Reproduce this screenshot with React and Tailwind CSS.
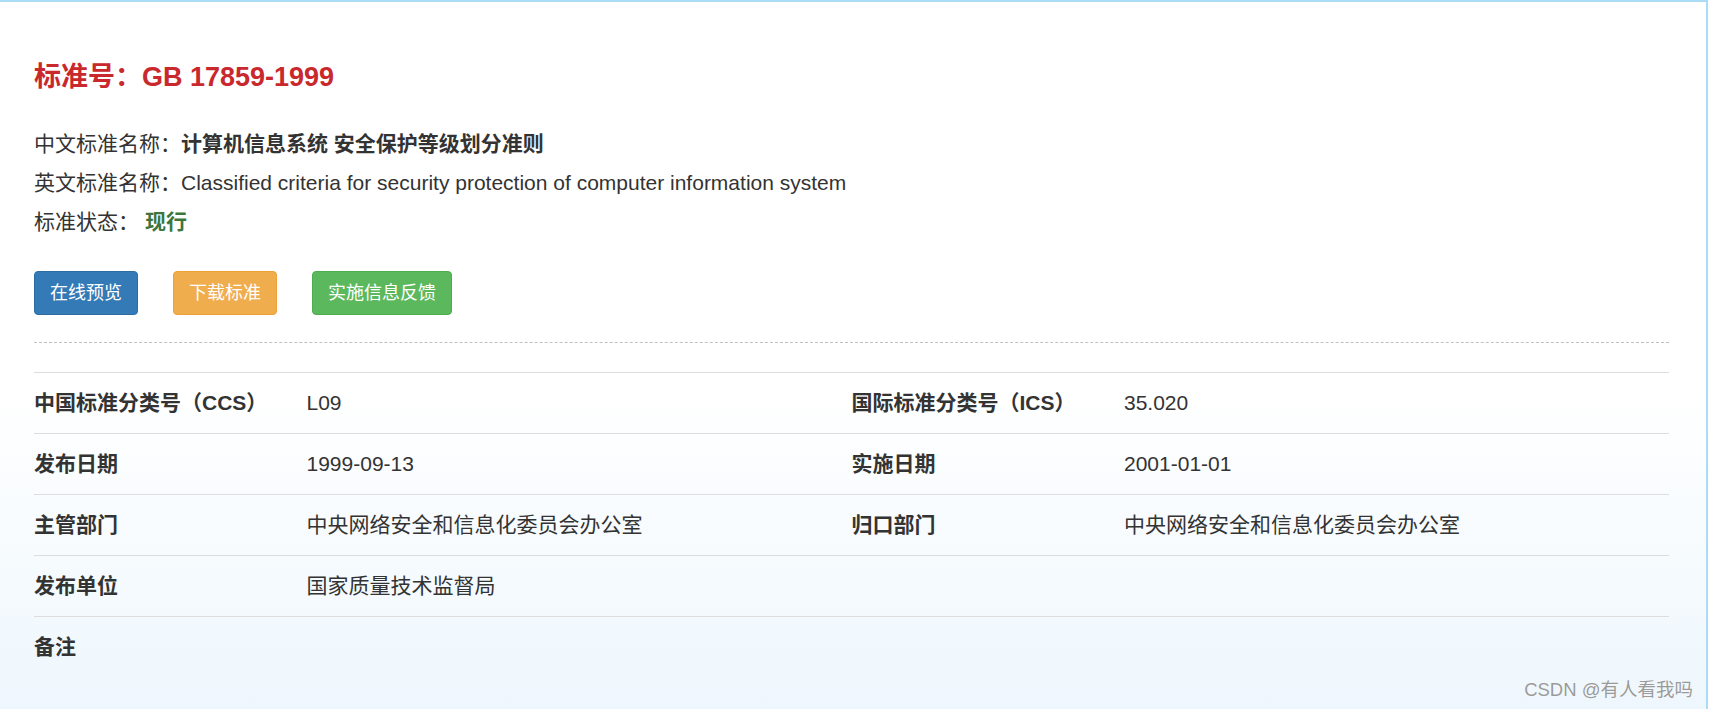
const font = { fontFamily: '"Liberation Sans", "Noto Sans CJK SC", sans-serif' };

const rows = [
  [["中国标准分类号（CCS）", "L09"], ["国际标准分类号（ICS）", "35.020"]],
  [["发布日期", "1999-09-13"], ["实施日期", "2001-01-01"]],
  [["主管部门", "中央网络安全和信息化委员会办公室"], ["归口部门", "中央网络安全和信息化委员会办公室"]],
  [["发布单位", "国家质量技术监督局"], null],
  [["备注", ""], null],
];

function Cell({ item }) {
  if (!item) return <div className="col-span-2" />;
  return (
    <>
      <div className="font-bold">{item[0]}</div>
      <div>{item[1]}</div>
    </>
  );
}

export default function App() {
  return (
    <div
      style={font}
      className="relative h-[709px] w-[1710px] overflow-hidden bg-white text-[21px] text-[#333]"
    >
      <div className="h-full w-[1708px] border-t-2 border-r-2 border-[#aadcf8] bg-linear-to-b from-white from-55% to-[#eef7fd] pl-[34px] pr-[37px]">
        <h1 className="mt-[60px] text-[27px] leading-[30px] font-bold text-[#c9282d]">
          标准号：GB 17859-1999
        </h1>

        <div className="mt-[32px] leading-[39px]">
          <div>
            中文标准名称：<span className="font-bold">计算机信息系统 安全保护等级划分准则</span>
          </div>
          <div>英文标准名称：Classified criteria for security protection of computer information system</div>
          <div>
            标准状态：<span className="ml-[6px] font-bold text-[#3c763d]">现行</span>
          </div>
        </div>

        <div className="mt-[30px] flex gap-[35px] text-[18px] text-white">
          <button className="h-[44px] rounded-[4px] border border-[#2e6da4] bg-[#337ab7] px-[15px]">在线预览</button>
          <button className="h-[44px] rounded-[4px] border border-[#eea236] bg-[#f0ad4e] px-[15px]">下载标准</button>
          <button className="h-[44px] rounded-[4px] border border-[#4cae4c] bg-[#5cb85c] px-[15px]">实施信息反馈</button>
        </div>

        <div className="mt-[27px] border-t border-dashed border-[#c0c0c0]" />

        <div className="mt-[29px]">
          {rows.map((r, i) => (
            <div
              key={i}
              className="grid h-[61px] grid-cols-[1fr_2fr_1fr_2fr] items-center border-t border-[#dddddd]"
            >
              <Cell item={r[0]} />
              <Cell item={r[1]} />
            </div>
          ))}
        </div>
      </div>

      <div className="absolute right-[17px] bottom-[5px] text-[18.5px] text-[#9a9a9a] [text-shadow:0_0_1px_#fff]">
        CSDN @有人看我吗
      </div>
    </div>
  );
}
